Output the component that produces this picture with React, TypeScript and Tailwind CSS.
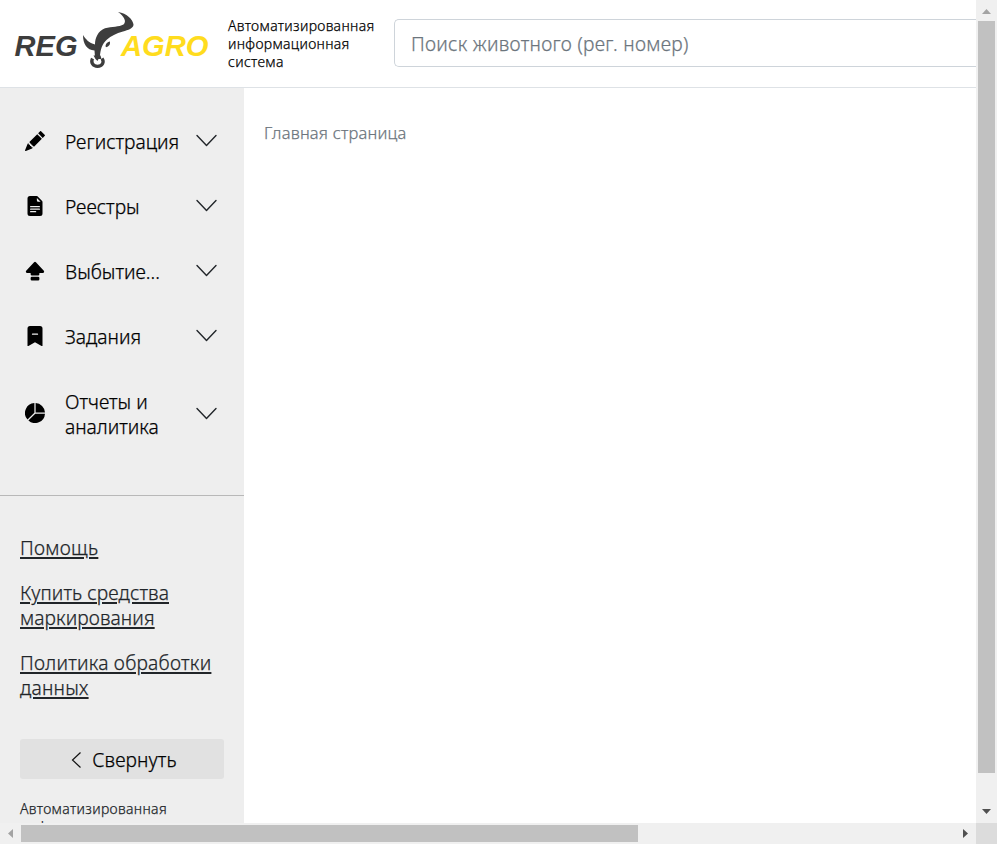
import React from 'react';
import { BsPencilFill, BsFileEarmarkTextFill, BsCapslockFill, BsBookmarkDashFill, BsPieChartFill } from 'react-icons/bs';

const menu = [
  { icon: BsPencilFill, lines: ['Регистрация'] },
  { icon: BsFileEarmarkTextFill, lines: ['Реестры'] },
  { icon: BsCapslockFill, lines: ['Выбытие...'] },
  { icon: BsBookmarkDashFill, lines: ['Задания'] },
  { icon: BsPieChartFill, lines: ['Отчеты и', 'аналитика'] },
];

const links = [
  { lines: ['Помощь'], tracking: 'tracking-[0.280px]' },
  { lines: ['Купить средства', 'маркирования'], tracking: 'tracking-[0.1px]' },
  { lines: ['Политика обработки', 'данных'], tracking: 'tracking-[0.250px]' },
];

function Logo() {
  return (
    <svg width="196" height="60" viewBox="14 10 196 60" className="block shrink-0 [-webkit-text-stroke:0px]">
      <g fontFamily="Liberation Sans, Arial, sans-serif" fontWeight="700" fontStyle="italic" fontSize="30">
        <text x="14.5" y="56" fill="#3d3d3d" textLength="63" lengthAdjust="spacingAndGlyphs">REG</text>
        <text x="121" y="56" fill="#ffdc1e" textLength="87.5" lengthAdjust="spacingAndGlyphs">AGRO</text>
      </g>
      <path fill="#3d3d3d" d="M118 12C127 13 133 20 133.500 24.500C133.500 28.500 128 30 123 31.500C116 33.500 111 36 107 39.500C102 44 100.500 49 99.800 57.500L95 57L94.500 50.500C87 50 83 44 83 35C86 39.500 89 43 95 44.500C95 38 98 31 105 28.300C112 26.500 119 27 123.500 24.500C127 21.500 124 16 118 12Z" />
      <path fill="#3d3d3d" d="M105.500 46Q106 42 110 41.500Q110.500 46 106 47.300Z" />
      <path fill="none" stroke="#3d3d3d" strokeWidth="3.300" d="M92.500 58.500C90.500 62.500 93 66.300 97.500 66.300C102.500 66.300 104.500 62 102 58.500" />
      <path fill="#3d3d3d" d="M93.500 55.500H100.500L101.500 59H98.500L97.500 61L95.500 59Z" />
    </svg>
  );
}

function ChevronDown() {
  return (
    <svg width="22" height="14" viewBox="0 0 22 14" fill="none" stroke="#212529" strokeWidth="1.4" strokeLinecap="round" strokeLinejoin="round" className="mb-[1px] shrink-0">
      <path d="M1 1.500L10.500 11.500L20 1.500" />
    </svg>
  );
}

export default function App() {
  return (
    <div className="grid h-[844px] w-[997px] grid-cols-[976px_21px] grid-rows-[823px_21px] overflow-hidden bg-white font-['Noto_Sans','Open_Sans',sans-serif] font-light text-black [-webkit-text-stroke:0.250px]">
      <div className="flex min-w-0 flex-col overflow-hidden">
        <header className="flex h-[88px] shrink-0 border-b border-[#dee2e6]">
          <div className="w-[228px] shrink-0 pt-[10px] pl-[14px]"><Logo /></div>
          <div className="w-[166px] shrink-0 pt-[17px] text-[14px] leading-[18px] tracking-[0.320px]">
            Автоматизированная<br />информационная<br />система
          </div>
          <div className="mt-[19px] h-[48px] w-[582px] shrink-0 rounded-l-[5px] border border-r-0 border-[#ced4da] px-4 text-[19.200px] leading-[48px] tracking-[0.280px] whitespace-nowrap text-[#6c757d]">
            Поиск животного (рег. номер)
          </div>
        </header>
        <div className="flex min-h-0 flex-1">
          <aside className="w-[244px] shrink-0 overflow-hidden bg-[#eee]">
            <nav className="h-[408px] border-b border-[#b8b8b8] pt-[41px]">
              {menu.map(({ icon: Icon, lines }) => (
                <div key={lines[0]} className="mb-10 flex items-center pl-[25px]">
                  <Icon size={20} className="mb-[2px] shrink-0" />
                  <div className="ml-5 w-[131px] text-[19.200px] leading-[25px] whitespace-nowrap">
                    {lines.map((l) => <div key={l}>{l}</div>)}
                  </div>
                  <ChevronDown />
                </div>
              ))}
            </nav>
            <div className="flex flex-col gap-5 px-5 pt-[39px] text-[19.200px] leading-[25px] text-[#212529]">
              {links.map(({ lines, tracking }) => (
                <a key={lines[0]} className={`whitespace-nowrap ${tracking}`}>
                  {lines.map((l) => <span key={l} className="block underline decoration-[1.500px] underline-offset-[2px]">{l}</span>)}
                </a>
              ))}
            </div>
            <div className="mx-5 mt-[39px] flex h-10 items-center justify-center gap-[10px] rounded-[3px] bg-[#e1e1e1] pl-[4px] text-[19.200px] leading-[25px]">
              <svg width="11" height="18" viewBox="0 0 11 18" fill="none" stroke="#111" strokeWidth="1.200" className="mt-[2px]"><path d="M9.500 1.500L1.500 9L9.500 16.500" /></svg>
              <span className="tracking-[0.100px]">Свернуть</span>
            </div>
            <div className="mt-[20px] px-5 text-[14px] leading-[19px] tracking-[0.350px] text-[#212529]">
              Автоматизированная<br />информационная
            </div>
          </aside>
          <main className="flex-1 pt-[33px] pl-5 text-[16.500px] leading-6 tracking-[0.200px] text-[#6c757d]">Главная страница</main>
        </div>
      </div>
      <div className="flex flex-col items-center bg-[#f0f0f0]">
        <svg width="21" height="21" className="shrink-0"><path d="M6 14H15L10.500 9Z" fill="#a3a3a3" /></svg>
        <div className="h-[752px] w-[17px] bg-[#c1c1c1]" />
        <svg width="21" height="21" className="mt-auto mb-[1px] shrink-0"><path d="M6 8H15L10.500 13Z" fill="#505050" /></svg>
      </div>
      <div className="flex items-center bg-[#f0f0f0]">
        <svg width="21" height="21" className="shrink-0"><path d="M13 6V15L8 10.500Z" fill="#a3a3a3" /></svg>
        <div className="h-[17px] w-[617px] bg-[#c1c1c1]" />
        <svg width="21" height="21" className="ml-auto shrink-0"><path d="M8 6V15L13 10.500Z" fill="#505050" /></svg>
      </div>
      <div className="bg-[#dcdcdc]" />
    </div>
  );
}
